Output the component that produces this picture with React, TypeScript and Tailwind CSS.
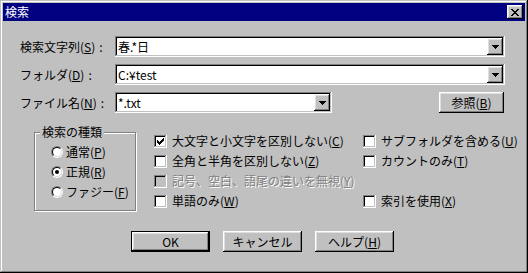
import React from "react";

const raised =
  "shadow-[inset_-1px_-1px_0_#000,inset_1px_1px_0_#fff,inset_-2px_-2px_0_#808080,inset_2px_2px_0_#dfdfdf]";
const sunken =
  "shadow-[inset_-1px_-1px_0_#fff,inset_1px_1px_0_#808080,inset_-2px_-2px_0_#c0c0c0,inset_2px_2px_0_#000]";

function Key({ k }: { k: string }) {
  return (
    <>
      (<u className="decoration-1 underline-offset-[1px]">{k}</u>)
    </>
  );
}

function Pixels({ rows, w, h, color = "#000" }: { rows: string[]; w: number; h: number; color?: string }) {
  return (
    <svg width={w} height={h} viewBox={`0 0 ${w} ${h}`} shapeRendering="crispEdges">
      {rows.map((r, y) =>
        r.split("").map((c, x) => (c === "#" ? <rect key={`${x}-${y}`} x={x} y={y} width={1} height={1} fill={color} /> : null))
      )}
    </svg>
  );
}

const arrow = ["#######", ".#####.", "..###..", "...#..."];
const cross = ["##....##", ".##..##.", "..####..", "...##...", "..####..", ".##..##.", "##....##"];
const tick = ["......#", ".....##", "#...###", "##.###.", "#####..", ".###...", "..#...."];

function Combo({ value, w }: { value: string; w: string }) {
  return (
    <div className={`flex h-[21px] items-center bg-white p-[2px] ${sunken} ${w}`}>
      <span className="flex-1 pl-[1px] leading-[12px]">{value}</span>
      <div className={`flex h-[17px] w-[16px] items-center justify-center bg-[#c0c0c0] ${raised}`}>
        <Pixels rows={arrow} w={7} h={4} />
      </div>
    </div>
  );
}

function Check({ label, checked, disabled }: { label: React.ReactNode; checked?: boolean; disabled?: boolean }) {
  return (
    <div className="flex h-[20px] items-center gap-[5px]">
      <div
        className={`flex h-[13px] w-[13px] items-center justify-center ${sunken} ${disabled ? "bg-[#c0c0c0]" : "bg-white"}`}
      >
        {checked && <Pixels rows={tick} w={7} h={7} />}
      </div>
      <span className={`leading-[12px] ${disabled ? "text-[#808080] [text-shadow:1px_1px_0_#fff]" : ""}`}>{label}</span>
    </div>
  );
}

function Radio({ label, checked }: { label: React.ReactNode; checked?: boolean }) {
  return (
    <div className="flex h-[20px] items-center gap-[3px]">
      <div className="h-[12px] w-[12px] rounded-full border border-t-[#808080] border-l-[#808080] border-b-white border-r-white">
        <div className="flex h-[10px] w-[10px] items-center justify-center rounded-full border border-t-black border-l-black border-b-[#dfdfdf] border-r-[#dfdfdf] bg-white">
          {checked && <div className="h-[4px] w-[4px] rounded-full bg-black" />}
        </div>
      </div>
      <span className="leading-[12px]">{label}</span>
    </div>
  );
}

function Btn({ children, def, w = "w-[79px]" }: { children: React.ReactNode; def?: boolean; w?: string }) {
  return (
    <div className={`h-[21px] ${w} ${def ? "border border-black" : ""}`}>
      <div className={`flex h-full w-full items-center justify-center leading-[12px] ${raised}`}>{children}</div>
    </div>
  );
}

export default function App() {
  return (
    <div className="h-[273px] w-[528px] bg-[#c0c0c0] p-[3px] text-[12px] text-black font-['Noto_Sans_CJK_JP',sans-serif] shadow-[inset_-1px_-1px_0_#000,inset_1px_1px_0_#c0c0c0,inset_-2px_-2px_0_#808080,inset_2px_2px_0_#fff]">
      {/* title bar */}
      <div className="flex h-[18px] items-center bg-[#000080] pl-[2px] pr-[2px]">
        <span className="leading-[12px] text-white">検索</span>
        <div className={`ml-auto flex h-[14px] w-[16px] items-center justify-center bg-[#c0c0c0] ${raised}`}>
          <Pixels rows={cross} w={8} h={7} />
        </div>
      </div>

      <div className="pl-[17px]">
        <div className="mt-[15px] flex items-center">
          <span className="w-[95px] leading-[12px]">
            検索文字列<Key k="S" />
            <span className="ml-[4px]">:</span>
          </span>
          <Combo value="春.*日" w="w-[390px]" />
        </div>
        <div className="mt-[7px] flex items-center">
          <span className="w-[95px] leading-[12px]">
            フォルダ<Key k="D" />
            <span className="ml-[4px]">:</span>
          </span>
          <Combo value="C:¥test" w="w-[390px]" />
        </div>
        <div className="mt-[7px] flex items-center">
          <span className="w-[95px] leading-[12px]">
            ファイル名<Key k="N" />
            <span className="ml-[4px]">:</span>
          </span>
          <Combo value="*.txt" w="w-[217px]" />
          <div className="ml-[107px]">
            <Btn w="w-[65px]">
              参照<Key k="B" />
            </Btn>
          </div>
        </div>

        {/* options */}
        <div className="mt-[18px] flex">
          <div className="relative ml-[14px] mt-[1px] h-[79px] w-[102px] border border-[#808080] shadow-[inset_1px_1px_0_#fff,1px_1px_0_#fff]">
            <span className="absolute left-[5px] top-[-7px] bg-[#c0c0c0] px-[2px] leading-[12px]">検索の種類</span>
            <div className="flex flex-col pl-[16px] pt-[9px]">
              <Radio label={<>通常<Key k="P" /></>} />
              <Radio label={<>正規<Key k="R" /></>} checked />
              <Radio label={<>ファジー<Key k="F" /></>} />
            </div>
          </div>
          <div className="ml-[18px] flex w-[209px] flex-col">
            <Check label={<>大文字と小文字を区別しない<Key k="C" /></>} checked />
            <Check label={<>全角と半角を区別しない<Key k="Z" /></>} />
            <Check label={<>記号、空白、語尾の違いを無視<Key k="Y" /></>} disabled />
            <Check label={<>単語のみ<Key k="W" /></>} />
          </div>
          <div className="flex flex-col">
            <Check label={<>サブフォルダを含める<Key k="U" /></>} />
            <Check label={<>カウントのみ<Key k="T" /></>} />
            <div className="h-[20px]" />
            <Check label={<>索引を使用<Key k="X" /></>} />
          </div>
        </div>

        {/* buttons */}
        <div className="ml-[111px] mt-[20px] flex gap-[13px]">
          <Btn def>OK</Btn>
          <Btn>キャンセル</Btn>
          <Btn>
            ヘルプ<Key k="H" />
          </Btn>
        </div>
      </div>
    </div>
  );
}
